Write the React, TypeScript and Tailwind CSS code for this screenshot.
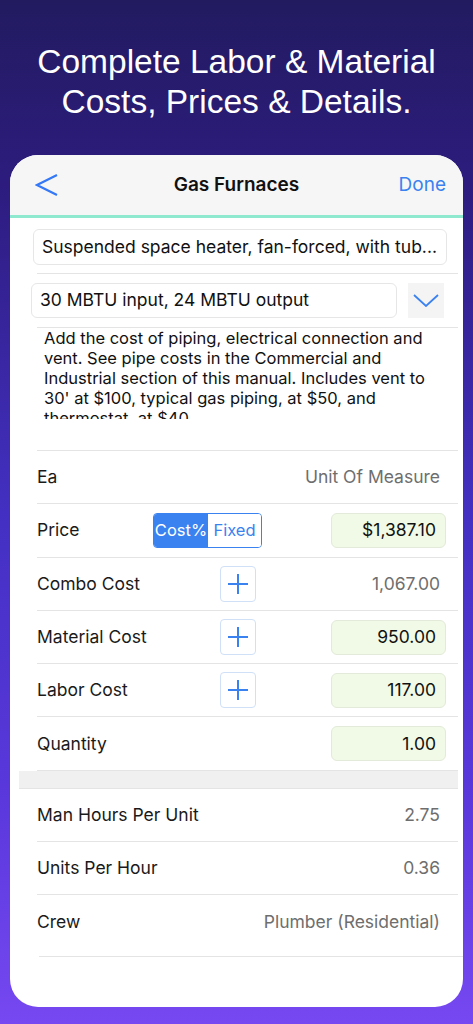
import React from 'react';

const sf = { fontFamily: 'Inter, "Liberation Sans", sans-serif' };

const Plus = () => (
    <div className="w-9 h-9 rounded border border-[#cfe0f7] flex items-center justify-center bg-white">
        <svg width="22" height="22" viewBox="0 0 22 22">
            <path d="M11 1v20M1 11h20" stroke="#3a82f0" strokeWidth="2" />
        </svg>
    </div>
);

const Field = ({ value }: { value: string }) => (
    <div className="w-[115px] h-[35px] rounded-md border border-[#e3ead9] bg-[#f1fae6] flex items-center justify-end pr-[9px] text-[17.5px] text-[#111]">
        {value}
    </div>
);

const Row = ({ label, middle, right }: { label: string; middle?: React.ReactNode; right: React.ReactNode }) => (
    <div className="h-[53.3px] flex items-center border-b border-[#e4e4e4] ml-[18px]">
        <div className="w-[183px] text-[17.5px] text-[#1a1a1a]">{label}</div>
        <div className="flex-1">{middle}</div>
        <div className="pr-[12px]">{right}</div>
    </div>
);

const Gray = ({ children }: { children: React.ReactNode }) => (
    <span className="text-[17.5px] text-[#6e6e6e] pr-[6px]">{children}</span>
);

export default function App() {
    return (
        <div
            className="min-h-[1024px] w-full flex flex-col bg-[linear-gradient(180deg,#221b60_0%,#2d1c7e_18%,#4330c2_50%,#5a38dc_78%,#7648f1_100%)]"
            style={sf}
        >
            {/* Headline */}
            <h1
                className="pt-[42px] text-center text-white text-[33.5px] leading-[40px]"
                style={{ fontFamily: '"Liberation Sans", Arial, sans-serif' }}
            >
                Complete Labor &amp; Material
                <br />
                Costs, Prices &amp; Details.
            </h1>

            {/* Phone card */}
            <div className="mt-[33px] mx-[10px] h-[852px] rounded-[28px] bg-white overflow-hidden flex flex-col">
                <div className="h-[60px] bg-[#f6f6f7] flex items-center justify-between px-[26px] relative">
                    <svg width="24" height="24" viewBox="0 0 24 24" className="-ml-[1px]">
                        <path d="M22 2 L2 12 L22 22" fill="none" stroke="#3478f6" strokeWidth="2.2" />
                    </svg>
                    <span className="absolute left-0 right-0 text-center text-[19px] font-semibold text-[#111] pointer-events-none">
                        Gas Furnaces
                    </span>
                    <span className="text-[19px] text-[#3a82f0] -mr-[9px]">Done</span>
                </div>
                <div className="h-[3px] bg-[#8fe9cf]" />

                <div className="pl-[9px] pr-[5px]">
                    {/* Item name */}
                    <div className="pt-[11px] pb-[8px] border-b border-[#e4e4e4] ml-[18px]">
                        <div className="-ml-[4px] mr-[11px] h-[36px] rounded-md border border-[#e6e6e6] flex items-center px-[8px] text-[17.5px] text-[#111] whitespace-nowrap overflow-hidden">
                            Suspended space heater, fan-forced, with tub...
                        </div>
                    </div>

                    {/* Size selector */}
                    <div className="pt-[9px] pb-[9px] border-b border-[#e4e4e4] ml-[18px] flex items-center gap-[11px]">
                        <div className="-ml-[6px] w-[366px] h-[35px] rounded-md border border-[#e6e6e6] flex items-center px-[8px] text-[17.5px] text-[#111] whitespace-nowrap">
                            30 MBTU input, 24 MBTU output
                        </div>
                        <div className="w-[36px] h-[35px] bg-[#f4f4f4] flex items-center justify-center">
                            <svg width="26" height="13" viewBox="0 0 26 13">
                                <path d="M1 1 L13 12 L25 1" fill="none" stroke="#3a82f0" strokeWidth="1.8" />
                            </svg>
                        </div>
                    </div>

                    {/* Description */}
                    <div className="h-[123px] border-b border-[#e4e4e4] ml-[18px]">
                        <div className="h-[91px] overflow-hidden pl-[7px] pr-[14px] text-[16.5px] leading-[20px] text-[#111]">
                            Add the cost of piping, electrical connection and vent. See pipe costs in the Commercial and
                            Industrial section of this manual. Includes vent to 30' at $100, typical gas piping, at $50, and
                            thermostat, at $40.
                        </div>
                    </div>

                    <Row label="Ea" right={<Gray>Unit Of Measure</Gray>} />
                    <Row
                        label="Price"
                        middle={
                            <div className="-ml-[67px] w-[109px] h-[35px] rounded border border-[#3a82f0] flex overflow-hidden text-[16.5px]">
                                <div className="w-[54px] bg-[#3a82f0] text-white flex items-center justify-center">Cost%</div>
                                <div className="flex-1 bg-white text-[#3a82f0] flex items-center justify-center">Fixed</div>
                            </div>
                        }
                        right={<Field value="$1,387.10" />}
                    />
                    <Row label="Combo Cost" middle={<Plus />} right={<Gray>1,067.00</Gray>} />
                    <Row label="Material Cost" middle={<Plus />} right={<Field value="950.00" />} />
                    <Row label="Labor Cost" middle={<Plus />} right={<Field value="117.00" />} />
                    <Row label="Quantity" right={<Field value="1.00" />} />

                    <div className="h-[18px] bg-[#f0f0f0] border-b border-[#e4e4e4]" />

                    <Row label="Man Hours Per Unit" right={<Gray>2.75</Gray>} />
                    <Row label="Units Per Hour" right={<Gray>0.36</Gray>} />
                    <div className="h-[53px] flex items-center ml-[18px]">
                        <div className="flex-1 text-[17.5px] text-[#1a1a1a]">Crew</div>
                        <div className="pr-[12px]">
                            <Gray>Plumber (Residential)</Gray>
                        </div>
                    </div>
                    <div className="mt-[8px] ml-[20px] -mr-[5px] border-b border-[#e4e4e4]" />
                </div>
            </div>
            <div className="h-[17px]" />
        </div>
    );
}
